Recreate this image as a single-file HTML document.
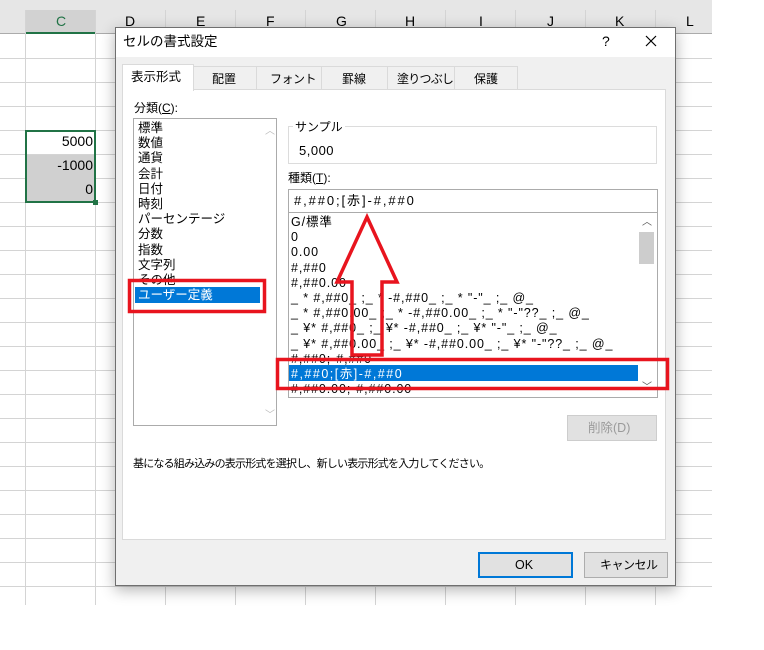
<!DOCTYPE html>
<html><head><meta charset="utf-8"><style>
*{margin:0;padding:0;box-sizing:border-box}
body{width:764px;height:650px;background:#fff;position:relative;overflow:hidden;font-family:"Liberation Sans","Noto Sans CJK JP",sans-serif;font-size:12px;color:#000}
.a{position:absolute}
.t{position:absolute;white-space:nowrap;line-height:15px}
</style></head><body>
<div class="a" style="left:0;top:0;width:712px;height:34px;background:#e6e6e6;border-bottom:1px solid #ababab"></div>
<div class="a" style="left:25px;top:10px;width:70px;height:24px;background:#d2d2d2;border-bottom:2px solid #217346"></div>
<svg class="a" style="left:0;top:0" width="764" height="650">
<g stroke="#d4d4d4" stroke-width="1">
<line x1="25.5" y1="10" x2="25.5" y2="605"/><line x1="95.5" y1="10" x2="95.5" y2="605"/><line x1="165.5" y1="10" x2="165.5" y2="605"/><line x1="235.5" y1="10" x2="235.5" y2="605"/><line x1="305.5" y1="10" x2="305.5" y2="605"/><line x1="375.5" y1="10" x2="375.5" y2="605"/><line x1="445.5" y1="10" x2="445.5" y2="605"/><line x1="515.5" y1="10" x2="515.5" y2="605"/><line x1="585.5" y1="10" x2="585.5" y2="605"/><line x1="655.5" y1="10" x2="655.5" y2="605"/>
<line x1="0" y1="58.5" x2="712" y2="58.5"/><line x1="0" y1="82.5" x2="712" y2="82.5"/><line x1="0" y1="106.5" x2="712" y2="106.5"/><line x1="0" y1="130.5" x2="712" y2="130.5"/><line x1="0" y1="154.5" x2="712" y2="154.5"/><line x1="0" y1="178.5" x2="712" y2="178.5"/><line x1="0" y1="202.5" x2="712" y2="202.5"/><line x1="0" y1="226.5" x2="712" y2="226.5"/><line x1="0" y1="250.5" x2="712" y2="250.5"/><line x1="0" y1="274.5" x2="712" y2="274.5"/><line x1="0" y1="298.5" x2="712" y2="298.5"/><line x1="0" y1="322.5" x2="712" y2="322.5"/><line x1="0" y1="346.5" x2="712" y2="346.5"/><line x1="0" y1="370.5" x2="712" y2="370.5"/><line x1="0" y1="394.5" x2="712" y2="394.5"/><line x1="0" y1="418.5" x2="712" y2="418.5"/><line x1="0" y1="442.5" x2="712" y2="442.5"/><line x1="0" y1="466.5" x2="712" y2="466.5"/><line x1="0" y1="490.5" x2="712" y2="490.5"/><line x1="0" y1="514.5" x2="712" y2="514.5"/><line x1="0" y1="538.5" x2="712" y2="538.5"/><line x1="0" y1="562.5" x2="712" y2="562.5"/><line x1="0" y1="586.5" x2="712" y2="586.5"/>
</g></svg>
<div class="t" style="left:56px;top:14px;font-size:14px;color:#217346">C</div>
<div class="t" style="left:125px;top:14px;font-size:14px">D</div>
<div class="t" style="left:196px;top:14px;font-size:14px">E</div>
<div class="t" style="left:266px;top:14px;font-size:14px">F</div>
<div class="t" style="left:336px;top:14px;font-size:14px">G</div>
<div class="t" style="left:405px;top:14px;font-size:14px">H</div>
<div class="t" style="left:479px;top:14px;font-size:14px">I</div>
<div class="t" style="left:547px;top:14px;font-size:14px">J</div>
<div class="t" style="left:615px;top:14px;font-size:14px">K</div>
<div class="t" style="left:686px;top:14px;font-size:14px">L</div>
<div class="a" style="left:26px;top:155px;width:68px;height:47px;background:#d0d0d0"></div>
<div class="a" style="left:25px;top:130px;width:71px;height:73px;border:2px solid #217346"></div>
<div class="a" style="left:93px;top:200px;width:5px;height:5px;background:#217346"></div>
<div class="t" style="right:671px;top:134px;font-size:14px">5000</div>
<div class="t" style="right:671px;top:158px;font-size:14px">-1000</div>
<div class="t" style="right:671px;top:182px;font-size:14px">0</div>
<div class="a" style="left:115px;top:27px;width:561px;height:559px;background:#f0f0f0;border:1px solid #6f6f6f;box-shadow:0 4px 14px rgba(0,0,0,.3)"></div>
<div class="a" style="left:116px;top:28px;width:559px;height:29px;background:#fff"></div>
<div class="t" style="left:123px;top:34px;font-size:13.5px">セルの書式設定</div>
<div class="t" style="left:602px;top:34px;font-size:14px">?</div>
<svg class="a" style="left:645px;top:35px" width="12" height="12"><path d="M1 1L11 11M11 1L1 11" stroke="#000" stroke-width="1.2"/></svg>
<div class="a" style="left:193px;top:66px;width:325px;height:24px;background:#f0f0f0;border:1px solid #dadada"></div>
<div class="a" style="left:256px;top:66px;width:1px;height:24px;background:#dadada"></div>
<div class="a" style="left:321px;top:66px;width:1px;height:24px;background:#dadada"></div>
<div class="a" style="left:387px;top:66px;width:1px;height:24px;background:#dadada"></div>
<div class="a" style="left:454px;top:66px;width:1px;height:24px;background:#dadada"></div>
<div class="a" style="left:122px;top:89px;width:544px;height:451px;background:#fff;border:1px solid #dadada"></div>
<div class="a" style="left:122px;top:64px;width:72px;height:27px;background:#fff;border:1px solid #dadada;border-bottom:none"></div>
<div class="t" style="left:131px;top:70px;font-size:12.5px">表示形式</div>
<div class="t" style="left:212px;top:72px">配置</div>
<div class="t" style="left:270px;top:72px;letter-spacing:-0.5px">フォント</div>
<div class="t" style="left:342px;top:72px">罫線</div>
<div class="t" style="left:397px;top:72px;letter-spacing:-0.8px">塗りつぶし</div>
<div class="t" style="left:474px;top:72px">保護</div>
<div class="t" style="left:134px;top:101px">分類(<u>C</u>):</div>
<div class="a" style="left:133px;top:118px;width:144px;height:308px;border:1px solid #ababab;background:#fff"></div>
<div class="t" style="left:265px;top:124px;font-size:10px;color:#bbb">︿</div>
<div class="t" style="left:265px;top:408px;font-size:10px;color:#bbb">﹀</div>
<div class="a" style="left:135px;top:287px;width:125px;height:16px;background:#0078d7"></div>
<div class="t" style="left:138px;top:121px;line-height:15.2px;font-size:12.5px">標準<br>数値<br>通貨<br>会計<br>日付<br>時刻<br>パーセンテージ<br>分数<br>指数<br>文字列<br>その他<br><span style="color:#fff">ユーザー定義</span></div>
<div class="a" style="left:288px;top:126px;width:369px;height:38px;border:1px solid #dcdcdc"></div>
<div class="t" style="left:293px;top:120px;background:#fff;padding:0 2px">サンプル</div>
<div class="t" style="left:299px;top:143px;font-size:13px;letter-spacing:0.5px">5,000</div>
<div class="t" style="left:288px;top:171px">種類(<u>T</u>):</div>
<div class="a" style="left:288px;top:189px;width:370px;height:24px;border:1px solid #ababab"></div>
<div class="t" style="left:294px;top:193px;font-size:13px;letter-spacing:1.9px">#,##0;[赤]-#,##0</div>
<div class="a" style="left:288px;top:212px;width:370px;height:186px;border:1px solid #ababab;background:#fff;overflow:hidden"></div>
<div class="a" style="left:639px;top:232px;width:15px;height:32px;background:#cdcdcd"></div>
<div class="t" style="left:642px;top:215px;font-size:10px;color:#555">︿</div>
<div class="t" style="left:642px;top:380px;font-size:10px;color:#555">﹀</div>
<div class="a" style="left:289px;top:365px;width:349px;height:16px;background:#0078d7"></div>
<div class="a" style="left:290px;top:213px;width:348px;height:184px;overflow:hidden">
<div class="t" style="left:1px;top:2px;line-height:15.2px;font-size:12.5px;letter-spacing:0.9px">G/標準<br>0<br>0.00<br>#,##0<br>#,##0.00<br>_ * #,##0_ ;_ * -#,##0_ ;_ * "-"_ ;_ @_<br>_ * #,##0.00_ ;_ * -#,##0.00_ ;_ * "-"??_ ;_ @_<br>_ ¥* #,##0_ ;_ ¥* -#,##0_ ;_ ¥* "-"_ ;_ @_<br>_ ¥* #,##0.00_ ;_ ¥* -#,##0.00_ ;_ ¥* "-"??_ ;_ @_<br>#,##0;-#,##0<br><span style="color:#fff;letter-spacing:1.5px">#,##0;[赤]-#,##0</span><br>#,##0.00;-#,##0.00</div></div>
<div class="a" style="left:567px;top:415px;width:90px;height:26px;background:#e1e1e1;border:1px solid #cdcdcd"></div>
<div class="t" style="left:588px;top:421px;color:#9a9a9a;font-size:12.5px">削除(D)</div>
<div class="t" style="left:133px;top:457px;font-size:11px;letter-spacing:-0.8px">基になる組み込みの表示形式を選択し、新しい表示形式を入力してください。</div>
<div class="a" style="left:478px;top:552px;width:95px;height:26px;background:#e1e1e1;border:2px solid #0078d7"></div>
<div class="t" style="left:515px;top:558px;font-size:12.5px">OK</div>
<div class="a" style="left:584px;top:552px;width:84px;height:26px;background:#e1e1e1;border:1px solid #adadad"></div>
<div class="t" style="left:600px;top:558px;letter-spacing:-0.5px">キャンセル</div>
<svg class="a" style="left:0;top:0" width="764" height="650">
<g fill="none" stroke="#e8141e" stroke-width="3.5">
<rect x="129.5" y="280.5" width="135" height="31"/>
<rect x="277.5" y="359.5" width="390" height="29"/>
<path d="M367 217 L397 282 L382 282 L382 355 L352 355 L352 282 L337 282 Z"/>
</g></svg>
</body></html>
